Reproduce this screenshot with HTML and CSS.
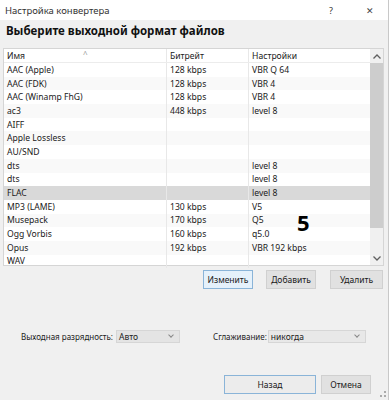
FILE: index.html
```html
<!DOCTYPE html>
<html lang="ru">
<head>
    <meta charset="UTF-8">
    <meta name="viewport" content="width=device-width, initial-scale=1.0">
    <title>Настройка конвертера</title>
    <link rel="stylesheet" href="styles.css">
</head>
<body>
    <div class="window">
        <div class="titlebar">
            <span class="title">Настройка конвертера</span>
            <span class="help">?</span>
            <span class="close">✕</span>
        </div>
        <div class="content">
            <h1>Выберите выходной формат файлов</h1>
            <div class="list">
                <table>
                    <thead>
                        <tr>
                            <th class="col-name">Имя<span class="sort">^</span></th>
                            <th class="col-rate">Битрейт</th>
                            <th>Настройки</th>
                        </tr>
                    </thead>
                    <tbody id="format-list"></tbody>
                </table>
                <div class="scrollbar">
                    <div class="arrow">
                        <svg width="8" height="5" viewBox="0 0 8 5"><path d="M0.5 4.5 L4 1 L7.5 4.5" fill="none" stroke="#606060" stroke-width="1.3"/></svg>
                    </div>
                    <div class="track"><div class="thumb"></div></div>
                    <div class="arrow">
                        <svg width="8" height="5" viewBox="0 0 8 5"><path d="M0.5 0.5 L4 4 L7.5 0.5" fill="none" stroke="#606060" stroke-width="1.3"/></svg>
                    </div>
                </div>
            </div>
            <div class="actions">
                <button class="focus edit">Изменить</button>
                <button class="add">Добавить</button>
                <button class="remove">Удалить</button>
            </div>
            <div class="options">
                <label>Выходная разрядность:</label>
                <div class="select short">Авто<span class="chev"></span></div>
                <label class="second">Сглаживание:</label>
                <div class="select long">никогда<span class="chev"></span></div>
            </div>
            <div class="footer">
                <button class="wide focus">Назад</button>
                <button>Отмена</button>
            </div>
        </div>
        <div class="badge">5</div>
        <div class="grip"></div>
    </div>

    <script>
        let formats = [
            { name: "AAC (Apple)", rate: "128 kbps", opts: "VBR Q 64" },
            { name: "AAC (FDK)", rate: "128 kbps", opts: "VBR 4" },
            { name: "AAC (Winamp FhG)", rate: "128 kbps", opts: "VBR 4" },
            { name: "ac3", rate: "448 kbps", opts: "level 8" },
            { name: "AIFF", rate: "", opts: "" },
            { name: "Apple Lossless", rate: "", opts: "" },
            { name: "AU/SND", rate: "", opts: "" },
            { name: "dts", rate: "", opts: "level 8" },
            { name: "dts", rate: "", opts: "level 8" },
            { name: "FLAC", rate: "", opts: "level 8", selected: true },
            { name: "MP3 (LAME)", rate: "130 kbps", opts: "V5" },
            { name: "Musepack", rate: "170 kbps", opts: "Q5" },
            { name: "Ogg Vorbis", rate: "160 kbps", opts: "q5.0" },
            { name: "Opus", rate: "192 kbps", opts: "VBR 192 kbps" },
            { name: "WAV", rate: "", opts: "" }
        ];

        let list = document.getElementById("format-list");
        formats.forEach((item) => {
            let row = `<tr class="${item.selected ? "selected" : ""}">
                <td>${item.name}</td>
                <td>${item.rate}</td>
                <td>${item.opts}</td>
            </tr>`;
            list.innerHTML += row;
        });
    </script>
</body>
</html>
```

FILE: styles.css
```css
body {
    margin: 0;
    background: #ffffff;
    font-family: "Noto Sans", "Open Sans", sans-serif;
    color: #1a1a1a;
}
.window {
    position: relative;
    width: 388px;
    height: 400px;
    background: #f0f0f0;
    border-right: 1px solid #c8c8c8;
}
.titlebar {
    height: 20px;
    background: #ffffff;
    display: flex;
    align-items: center;
    padding-left: 5px;
    font-size: 9.5px;
    color: #333;
}
.title { flex: 1; }
.help {
    width: 12px;
    margin-right: 25px;
    font-size: 9px;
}
.close {
    width: 12px;
    margin-right: 10px;
    font-size: 9px;
    color: #444;
}
.content {
    padding: 0 4px 0 3px;
}
h1 {
    margin: 0;
    height: 28px;
    line-height: 22px;
    padding-left: 3px;
    font-size: 11.5px;
    font-weight: 700;
    color: #111;
}
.list {
    display: flex;
    height: 218px;
    background: #ffffff;
    border: 1px solid #d5d5d5;
    box-sizing: border-box;
}
table {
    flex: 1;
    border-collapse: collapse;
    table-layout: fixed;
    align-self: flex-start;
    font-size: 8.6px;
}
th, td {
    height: 13.7px;
    padding: 0 0 0 3px;
    text-align: left;
    font-weight: 400;
    white-space: nowrap;
    border-left: 1px solid #e8e8e8;
}
th:first-child, td:first-child { border-left: none; }
th {
    height: 13px;
    border-bottom: 1px solid #ececec;
    color: #222;
}
.col-name { width: 159px; position: relative; }
.col-rate { width: 78px; }
.sort {
    position: absolute;
    left: 79px;
    top: -1px;
    color: #999;
    font-size: 8px;
}
tbody tr:nth-child(even) { background: #f9f9f9; }
tbody tr.selected { background: #d9d9d9; }
.scrollbar {
    width: 13px;
    display: flex;
    flex-direction: column;
    background: #f0f0f0;
}
.arrow {
    height: 14px;
    display: flex;
    align-items: center;
    justify-content: center;
}
.track { flex: 1; }
.thumb {
    height: 165px;
    background: #cdcdcd;
}
.actions {
    display: flex;
    justify-content: flex-end;
    padding-top: 4px;
    padding-right: 1px;
}
button {
    height: 19px;
    padding: 0;
    width: 50px;
    background: #e1e1e1;
    border: 1px solid #d0d0d0;
    font-family: "Noto Sans", "Open Sans", sans-serif;
    font-size: 8.5px;
    color: #1a1a1a;
}
.actions .edit { width: 50px; }
.actions .add { width: 50px; margin-left: 13px; }
.actions .remove { width: 53px; margin-left: 14px; }
button.focus {
    background: #e5f1fb;
    border-color: #8ab4d8;
}
.footer button.focus {
    background: #ececec;
}
.options {
    display: flex;
    align-items: center;
    margin-top: 41px;
    padding-left: 18px;
    font-size: 8px;
    color: #222;
}
.options label { margin-right: 3px; }
.options .second { margin-left: 33px; margin-right: 1px; }
.select {
    position: relative;
    height: 13px;
    line-height: 12px;
    box-sizing: border-box;
    padding-left: 2px;
    background: #e4e4e4;
    border: 1px solid #d6d6d6;
    font-size: 8.5px;
}
.select.short { width: 64px; }
.select.long { width: 98px; background: #e8e8e8; }
.chev {
    position: absolute;
    right: 6px;
    top: 2px;
    width: 3px;
    height: 3px;
    border-right: 1px solid #888;
    border-bottom: 1px solid #888;
    transform: rotate(45deg);
}
.footer {
    display: flex;
    justify-content: flex-end;
    gap: 5px;
    margin-top: 32px;
    padding-right: 13px;
}
.footer .wide { width: 92px; }
.badge {
    position: absolute;
    left: 297px;
    top: 207px;
    font-size: 22px;
    font-weight: 700;
    color: #000;
    font-family: "Noto Sans", sans-serif;
}
.grip {
    position: absolute;
    right: 2px;
    bottom: 3px;
    width: 4px;
    height: 4px;
    border-right: 2px dotted #aaa;
    border-bottom: 2px dotted #aaa;
}
```
